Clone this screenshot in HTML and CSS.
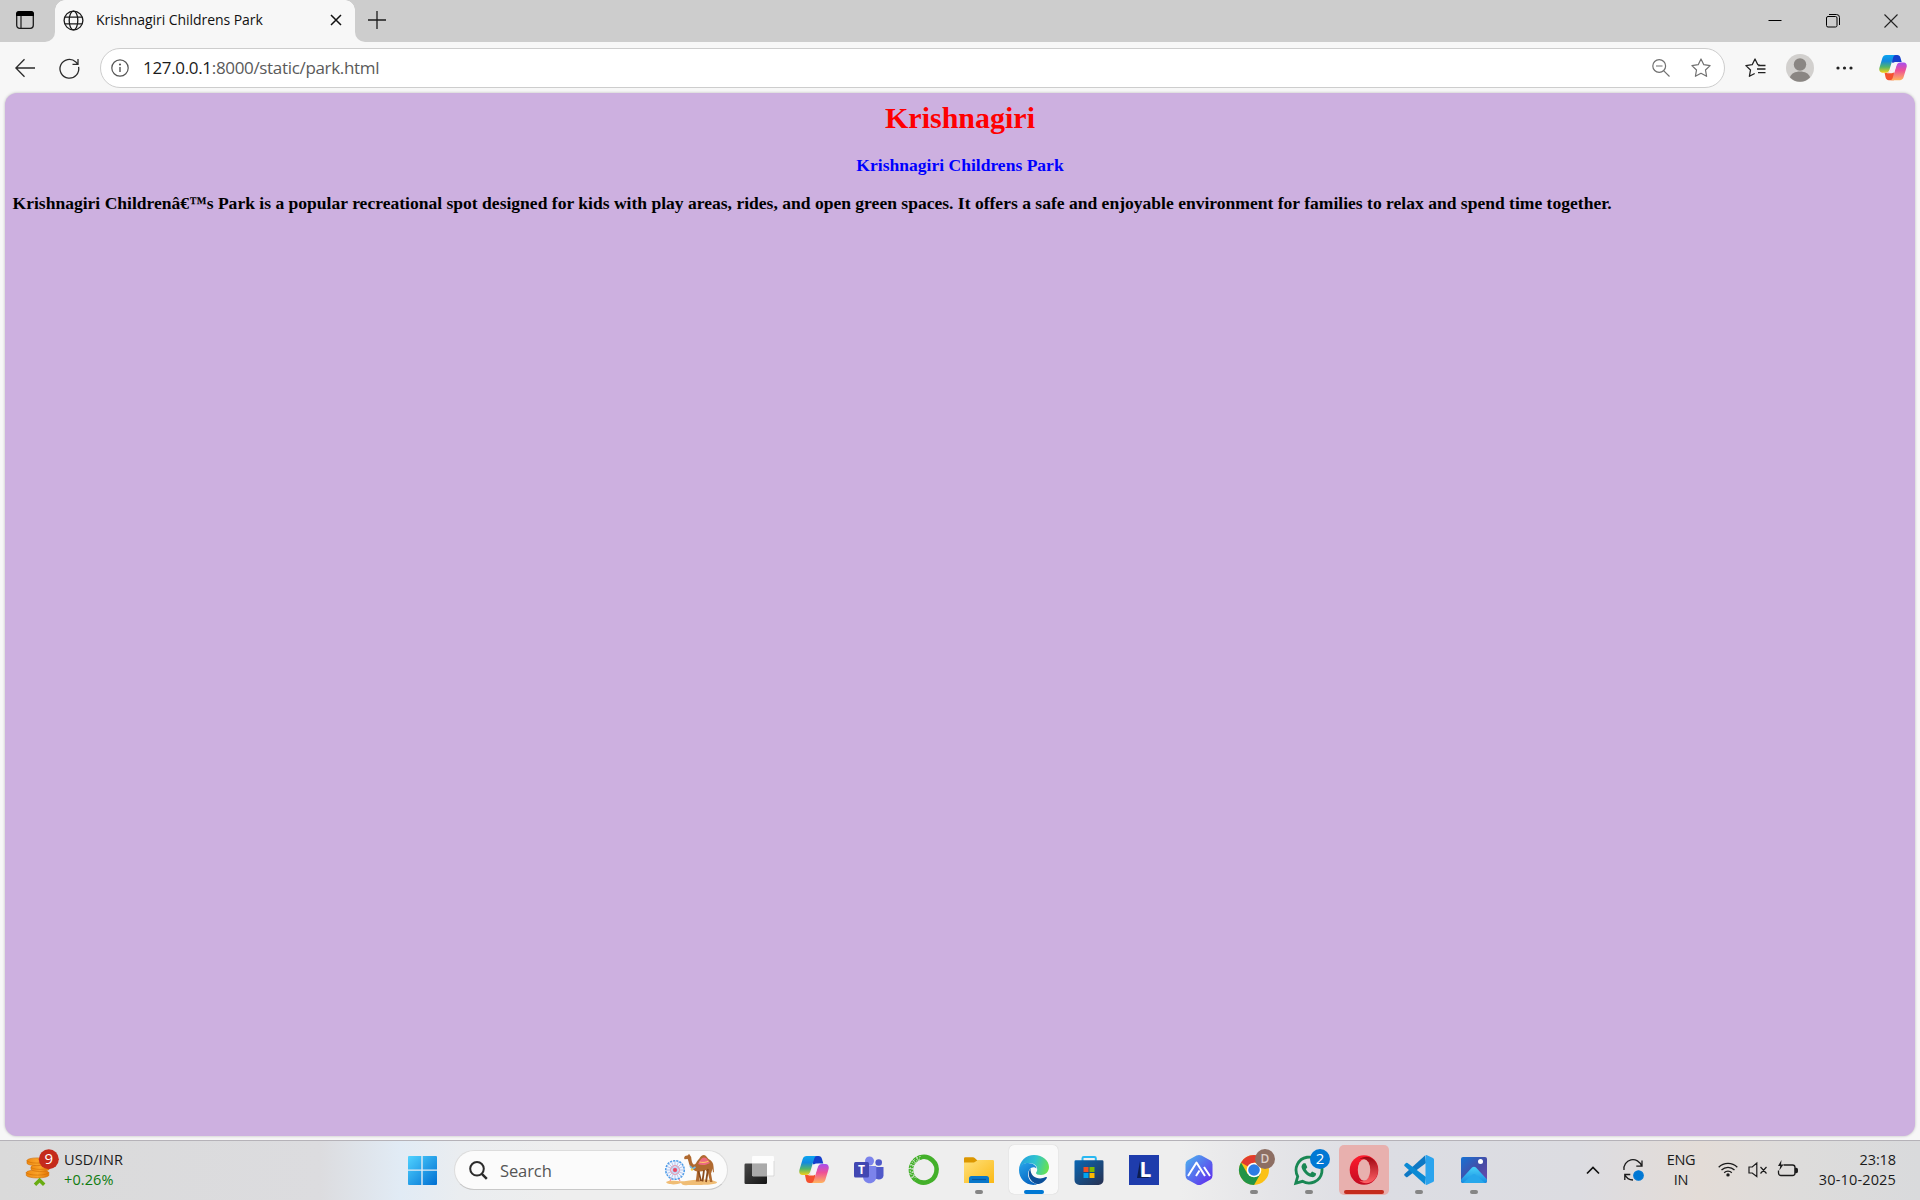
FILE: index.html
```html
<!DOCTYPE html>
<html lang="en">
<head>
<meta charset="utf-8">
<title>Krishnagiri Childrens Park</title>
<link rel="stylesheet" href="styles.css">
</head>
<body>
<svg class="defs" width="0" height="0">
  <defs>
    <linearGradient id="cpA" x1="0" y1="0" x2="0" y2="1"><stop offset="0" stop-color="#0ba5f0"/><stop offset=".35" stop-color="#1389e0"/><stop offset=".68" stop-color="#52b56a"/><stop offset="1" stop-color="#f5cf16"/></linearGradient>
    <linearGradient id="cpB" x1="0" y1="0" x2="0" y2="1"><stop offset="0" stop-color="#a64ef0"/><stop offset=".45" stop-color="#ee5097"/><stop offset="1" stop-color="#ffb45e"/></linearGradient>
    <symbol id="copilot" viewBox="0 0 30 30">
      <path d="M14 1h5.500c2 0 3 1 3.500 3l1.300 4.500H21c-1.500 0-2.500.8-3 2.500L14 9z" fill="#1640cc"/>
      <path d="M6 20h3.500c1.500 0 2.500-.8 3-2.500L16 20v8h-5.500c-2 0-3-1-3.500-3z" fill="#f4512e"/>
      <path d="M7.700 1H18c-1.600 0-2.300 1-2.900 3l-3.800 12.500c-.8 2.400-2 3.500-4.300 3.500H3.500C.8 20-.2 17.500.4 15L3.600 4.300C4.300 2 5.700 1 7.700 1z" fill="url(#cpA)"/>
      <path d="M22.300 28H12c1.600 0 2.300-1 2.900-3l3.800-12.500c.8-2.400 2-3.500 4.300-3.500h3.500c2.700 0 3.700 2.500 3.100 5l-3.200 10.700c-.7 2.300-2.100 3.300-4.100 3.300z" fill="url(#cpB)"/>
      <path d="M14 11.500c.6-2 1.500-3 3.500-3H22c-2 0-3 1.500-3.500 3.500l-1.800 6c-.6 2-1.600 2.500-3.200 2.500H8.500c2 0 3-1.200 3.600-3z" fill="#f6f3f6"/>
    </symbol>
    <linearGradient id="win" x1="0" y1="0" x2="1" y2="1"><stop offset="0" stop-color="#4fd2ff"/><stop offset="1" stop-color="#006fd2"/></linearGradient>
    <linearGradient id="dark" x1="0" y1="0" x2="1" y2="1"><stop offset="0" stop-color="#484848"/><stop offset="1" stop-color="#151515"/></linearGradient>
    <linearGradient id="fold" x1="0" y1="0" x2="1" y2="1"><stop offset="0" stop-color="#ffe07a"/><stop offset="1" stop-color="#fbb915"/></linearGradient>
    <linearGradient id="edgeTop" x1="0" y1=".4" x2="1" y2=".6"><stop offset="0" stop-color="#249fe0"/><stop offset=".5" stop-color="#2fc3cf"/><stop offset="1" stop-color="#6ae34c"/></linearGradient>
    <linearGradient id="edgeLow" x1="0" y1="0" x2=".5" y2="1"><stop offset="0" stop-color="#27a4ea"/><stop offset="1" stop-color="#0666c2"/></linearGradient>
    <linearGradient id="bag" x1="0" y1="0" x2="1" y2="1"><stop offset="0" stop-color="#0a67b4"/><stop offset="1" stop-color="#28304f"/></linearGradient>
    <linearGradient id="hex" x1="0" y1="0" x2="1" y2="1"><stop offset="0" stop-color="#4cb7ee"/><stop offset="1" stop-color="#6224ee"/></linearGradient>
    <linearGradient id="opera" x1="0" y1="0" x2="0" y2="1"><stop offset="0" stop-color="#ff1b2d"/><stop offset="1" stop-color="#c20b22"/></linearGradient>
    <linearGradient id="operaIn" x1="0" y1="0" x2="0" y2="1"><stop offset="0" stop-color="#9f0712"/><stop offset="1" stop-color="#ff6266"/></linearGradient>
    <linearGradient id="photo" x1="0" y1="0" x2="1" y2="1"><stop offset="0" stop-color="#1672d4"/><stop offset=".55" stop-color="#474ba5"/><stop offset="1" stop-color="#6e4bb0"/></linearGradient>
    <linearGradient id="hill" x1="0" y1="0" x2="0" y2="1"><stop offset="0" stop-color="#48d2fa"/><stop offset="1" stop-color="#168be0"/></linearGradient>
    <linearGradient id="coin" x1="0" y1="0" x2="1" y2="0"><stop offset="0" stop-color="#f08a10"/><stop offset=".5" stop-color="#f9a32a"/><stop offset="1" stop-color="#e57605"/></linearGradient>
  </defs>
</svg>

<header class="tabstrip">
  <div class="workspaces"><svg width="18" height="18" viewBox="0 0 18 18"><rect x=".7" y=".7" width="16.600" height="16.600" rx="3" fill="none" stroke="#1b1b1b" stroke-width="1.300"/><path d="M0 5V3a3 3 0 0 1 3-3h12a3 3 0 0 1 3 3v2z"/><path d="M5 5v12.500" stroke="#1b1b1b" stroke-width="1.200"/></svg></div>
  <div class="tab">
    <svg width="21" height="21" viewBox="0 0 21 21" fill="none" stroke="#1b1b1b" stroke-width="1.300"><circle cx="10.500" cy="10.500" r="9.400"/><ellipse cx="10.500" cy="10.500" rx="4.300" ry="9.400"/><path d="M2 7.200h17M2 13.800h17"/></svg>
    <span class="tab-title">Krishnagiri Childrens Park</span>
    <svg class="tab-close" width="12" height="12" viewBox="0 0 12 12" stroke="#111" stroke-width="1.500"><path d="M1 1l10 10M11 1L1 11"/></svg>
  </div>
  <svg class="newtab" width="18" height="18" viewBox="0 0 18 18" stroke="#1b1b1b" stroke-width="1.300"><path d="M9 0v18M0 9h18"/></svg>
  <div class="controls">
    <svg width="14" height="16" viewBox="0 0 14 16"><path d="M.5 7.500h13" stroke="#000"/></svg>
    <svg width="14" height="14" viewBox="0 0 14 14" fill="none" stroke="#000"><rect x=".5" y="2.500" width="10.500" height="10.500" rx="1.500"/><path d="M3 .5h7.500a3 3 0 0 1 3 3V11"/></svg>
    <svg width="14" height="14" viewBox="0 0 14 14" stroke="#222" stroke-width="1.100"><path d="M.5.5l13 13M13.500.5l-13 13"/></svg>
  </div>
</header>

<nav class="toolbar">
  <svg class="back" width="20" height="20" viewBox="0 0 20 20" fill="none" stroke="#2b2b2b" stroke-width="1.300"><path d="M20 10H1M9.500 1.200L.9 10l8.600 8.800"/></svg>
  <svg class="reload" width="21" height="21" viewBox="0 0 21 21" fill="none" stroke="#2b2b2b" stroke-width="1.300"><path d="M19.600 8.500A9.400 9.400 0 1 1 16.800 3.500l2 2.300M19 .5v5.500h-5.500" transform="translate(0 .4)"/></svg>
  <div class="address">
    <svg width="18" height="18" viewBox="0 0 18 18" fill="none" stroke="#555" stroke-width="1.200"><circle cx="9" cy="9" r="8.200"/><path d="M9 8v5" stroke-width="1.400"/><circle cx="9" cy="5.500" r=".5" fill="#555"/></svg>
    <span class="url"><b>127.0.0.1</b>:8000/static/park.html</span>
    <svg class="zoomout" width="18" height="18" viewBox="0 0 18 18" fill="none" stroke="#707070" stroke-width="1.200"><circle cx="7.200" cy="7" r="6.400"/><path d="M4 7h6.500M11.800 11.800l5.700 5.700"/></svg>
    <svg class="star" width="20" height="20" viewBox="0 0 20 20" fill="none" stroke="#707070" stroke-width="1.200" stroke-linejoin="round"><path d="M10 1l2.800 5.700 6.300.9-4.600 4.400 1.100 6.300L10 15.300l-5.600 3 1.100-6.300L.9 7.600l6.300-.9z"/></svg>
  </div>
  <svg class="favs" width="21" height="20" viewBox="0 0 21 20" fill="none" stroke="#222" stroke-width="1.300" stroke-linejoin="round"><path d="M14.500 6.900l-1.700-.2L10 1 7.200 6.700l-6.300.9L5.500 12l-1.100 6.300 5.300-2.800M13 7.500h7.500M12 11h8.500M13 14.600h7.500"/></svg>
  <svg class="profile" width="28" height="28" viewBox="0 0 28 28"><circle cx="14" cy="14" r="14" fill="#d2d0ce"/><circle cx="14" cy="10.500" r="6.200" fill="#8a8683"/><path d="M4 23.500c1.500-8 18.500-8 20 0A14 14 0 0 1 4 23.500z" fill="#8a8683"/></svg>
  <svg class="more" width="17" height="4" viewBox="0 0 17 4" fill="#222"><circle cx="2" cy="2" r="1.600"/><circle cx="8.500" cy="2" r="1.600"/><circle cx="15" cy="2" r="1.600"/></svg>
  <svg class="side-copilot" width="28" height="28"><use href="#copilot"/></svg>
</nav>

<main class="page">
  <h1>Krishnagiri</h1>
  <h3 class="place">Krishnagiri Childrens Park</h3>
  <h3 class="about">Krishnagiri Childrenâ€™s Park is a popular recreational spot designed for kids with play areas, rides, and open green spaces. It offers a safe and enjoyable environment for families to relax and spend time together.</h3>
</main>

<footer class="taskbar">
  <div class="widget">
    <svg width="34" height="38" viewBox="0 0 34 38">
      <g fill="url(#coin)" stroke="#cf6d05" stroke-width=".6"><path d="M.3 22.500v3c2 3.300 20.500 3.300 22.500 0v-3z"/><ellipse cx="11.500" cy="22.500" rx="11.200" ry="2.600"/><path d="M5 17v2.500c2 2.600 15 2.600 18 0V17z"/><ellipse cx="14" cy="17" rx="9" ry="2.400"/><path d="M1 10.500v3c2 2.800 18 2.800 20 0v-3z"/><ellipse cx="11" cy="10.500" rx="10" ry="2.600"/></g>
      <path d="M9 34.800l4.600-4.600 4.600 4.600" fill="none" stroke="#68ac12" stroke-width="3.400"/>
      <circle cx="22.800" cy="9.200" r="10" fill="#c42b1c"/><text x="22.800" y="14.300" class="badge-text">9</text>
    </svg>
    <div class="rates"><span>USD/INR</span><span class="up">+0.26%</span></div>
  </div>

  <div class="app start"><svg width="30" height="30" viewBox="0 0 30 30"><path d="M2 1h12.300v13.500H1V2a1 1 0 0 1 1-1zM15.700 1H29a1 1 0 0 1 1 1v12.500H15.700zM1 15.800h13.300V30H2a1 1 0 0 1-1-1zM15.700 15.800H30V29a1 1 0 0 1-1 1H15.700z" fill="url(#win)"/></svg></div>

  <div class="search">
    <svg width="19" height="19" viewBox="0 0 19 19" fill="none" stroke="#2b2b2b"><circle cx="8" cy="7.800" r="6.800" stroke-width="2"/><path d="M12.800 12.800l5 5" stroke-width="2.500"/></svg>
    <span>Search</span>
    <svg class="festival" width="53" height="32" viewBox="0 0 53 32">
      <path d="M1 28c4-3 13 0 20-1s22-3 31 1c1 3-17 3-25 3S18 32 16 29C12 31 2 31 1 28z" fill="#f0bd75"/>
      <path d="M10 17L5 27M10 17l5 10" stroke="#ff8c94" stroke-width="1.200"/>
      <circle cx="10" cy="16" r="9.300" fill="#eef5ff" stroke="#4a9be8" stroke-width="1.500" stroke-dasharray="2.200 1"/>
      <path d="M10 7v18M1 16h18M3.500 9.500l13 13M16.500 9.500l-13 13M6.500 8l7 16M13.500 8l-7 16M2 12.500l16 7M2 19.500l16-7" stroke="#93a5dc" stroke-width=".6"/><circle cx="10" cy="16" r="4.500" fill="none" stroke="#f08a9c" stroke-width=".8"/><circle cx="10" cy="16" r="2" fill="#ef4560"/>
      <path d="M19 4l1-2 3-.8L24-.2l1 1.400 1.200 1.800c.3 3 .8 7 2.800 7.500 2 .3 2.500-3.500 5-5.500 1.500-2.500 3-4 5-4s3 2.500 4.500 4c3 1.500 5 4 5 7.500l.5 6-1-.5-.6-3.500c-.4 2.500-1 4-1.400 5l1.500 8.500h-2.500l-2-9-2.500-3c-2 1-4 1.500-6 1.500L34 25l.8 2.500h-4l1.200-10c-4-1-7.500-4-8.500-10l-.8-2.500-3 .2z" fill="#b06a30"/>
      <path d="M39 16l-1.500 11.500M43 15l-2 13M33.500 17l2.500 10" stroke="#8a4a1c" stroke-width="1.800" fill="none"/>
      <path d="M33 10c1.500-2 3-6.500 6-6.500s4 3 6 5.500c-4 2.200-8 2.700-12 1z" fill="#ec6a82"/><path d="M34.500 8c3 .8 6 .5 9-.8" stroke="#ffd264" fill="none"/><path d="M25 12l2.500 3 3-2" stroke="#70bce5" stroke-width="1.600" fill="none"/><circle cx="27" cy="15.500" r="1.200" fill="#f9d247"/>
    </svg>
  </div>

  <div class="apps">
    <div class="app"><svg width="30" height="30" viewBox="0 0 30 30"><rect x=".5" y="8.500" width="22.500" height="20.500" rx="1.200" fill="url(#dark)"/><rect x="8" y="1" width="22" height="20.300" rx="1.200" fill="#fff" opacity=".85"/><path d="M8 8.500h15v12.800H9a1 1 0 0 1-1-1z" fill="#aaa"/><path d="M23 21h7V6" fill="none" stroke="#d2d2d2" stroke-width=".8"/></svg></div>
    <div class="app"><svg width="30" height="30"><use href="#copilot"/></svg></div>
    <div class="app"><svg width="30" height="30" viewBox="0 0 30 30"><circle cx="15.500" cy="6" r="4.500" fill="#7b83eb"/><circle cx="24.700" cy="7.500" r="3.300" fill="#5059c9"/><path d="M20 12h9.500v8.500c0 4.500-7 5-8.500 2z" fill="#5059c9"/><path d="M9 11h13.300v10.500c0 9-13.300 9-13.300 0z" fill="#7b83eb"/><rect y="7" width="15" height="15.500" rx="1.500" fill="#4147b2"/><text x="7.500" y="19" class="teams-text">T</text></svg></div>
    <div class="app"><svg width="30" height="30" viewBox="0 0 30 30" fill="none" stroke="#43b02a"><path d="M11 2.500A12.800 12.800 0 1 1 6.500 24.500" stroke-width="4.500"/><path d="M12 2.300A12.800 12.800 0 0 0 7 25" stroke-width="4.600" stroke-dasharray="3.600 .5"/><path d="M11.500 1.500A13.500 13.500 0 0 0 5 24M11 4A11.500 11.500 0 0 0 6.500 23" stroke="#eee" stroke-width=".9" stroke-dasharray="1.500 1.600"/></svg></div>
    <div class="app running"><svg width="30" height="30" viewBox="0 0 30 30"><path d="M0 8V3.500a1.300 1.300 0 0 1 1.300-1.300H9q1 0 1.700.7L14 6v3H0z" fill="#dc9700"/><path d="M0 7.500h10l4-2.500h14.700A1.300 1.300 0 0 1 30 6.300V28H0z" fill="url(#fold)"/><path d="M5 28v-4.500A2.500 2.500 0 0 1 7.500 21h15a2.500 2.500 0 0 1 2.500 2.500V28z" fill="#0877ca"/><path d="M8 24.500h14" stroke="#07559c" stroke-width="1.200"/></svg></div>
    <div class="app active"><svg width="30" height="30" viewBox="0 0 30 30"><path d="M0 14.500C.5 6 7 0 15 0c9 0 15 5.700 15 12 0 5-3.700 8-8 8-3.500 0-5-1-5-2 0-.7 1.200-1.400 1.200-3.600C18.200 10 14 8 9.500 8 5 8 1.500 10.500 0 14.500z" fill="url(#edgeTop)"/><path d="M0 15c0-4.500 4.500-7 9-7 5 0 8.500 3 8.500 5.500-1-1-2-1.300-3-1.300-3 0-5.500 3.500-5.500 7 0 5 4 9.500 9.500 9.500-1 .8-2.500 1.200-4 1.200C6 29.900 0 23 0 15z" fill="url(#edgeLow)"/><path d="M11.500 13.500c-4 5-1 13.500 6.500 15.500 4 .3 8-2.500 9.800-6 .4-.8-.3-1.300-1-.9C20 25.300 11 22.500 11.500 13.500z" fill="#0b4f99"/></svg></div>
    <div class="app"><svg width="30" height="30" viewBox="0 0 30 30"><path d="M8.500 6V3.200a1.300 1.300 0 0 1 1.300-1.300h10.700a1.300 1.300 0 0 1 1.300 1.300V6" fill="none" stroke="#28b8f2" stroke-width="2"/><path d="M.5 6.500a1.300 1.300 0 0 1 1.300-1.300h26.400a1.300 1.300 0 0 1 1.300 1.300V25a5 5 0 0 1-5 5h-19a5 5 0 0 1-5-5z" fill="url(#bag)"/><path d="M9.500 12h5v5h-5z" fill="#f25022"/><path d="M15.500 12h5v5h-5z" fill="#7fba00"/><path d="M9.500 18h5v5h-5z" fill="#00a4ef"/><path d="M15.500 18h5v5h-5z" fill="#ffb900"/></svg></div>
    <div class="app"><svg width="30" height="30" viewBox="0 0 30 30"><path d="M0 0h30v30H0z" fill="#1e3cac"/><path d="M11 6L8 23h11l3-2H12z" fill="#0d1d50"/><text x="16.500" y="22" class="letter">L</text></svg></div>
    <div class="app"><svg width="30" height="30" viewBox="0 0 30 30"><path d="M12.500.6q2.500-1.200 5 0l9 5q2 1.300 2 3.800v11.200q0 2.500-2 3.800l-9 5q-2.500 1.200-5 0l-9-5q-2-1.300-2-3.800V9.400q0-2.500 2-3.800z" fill="url(#hex)"/><path d="M4 21L12.500 7.500 21 21M12 21l3.500-5.500M20 12l6 9" fill="none" stroke="#fff" stroke-width="2" stroke-linejoin="round"/></svg></div>
    <div class="app running"><svg width="36" height="36" viewBox="0 -6 36 36" class="badged"><circle cx="15" cy="15" r="15" fill="#fbc116"/><path d="M15 15L2 7.500A15 15 0 0 1 28 7.500H15z" fill="#e33b2e"/><path d="M2 7.500A15 15 0 0 0 15 30l6.500-11.300L15 15l-6.500 3.700z" fill="#219447"/><circle cx="15" cy="15" r="7.300" fill="#fff"/><circle cx="15" cy="15" r="5.800" fill="#2c7be5"/><circle cx="26" cy="4" r="10" fill="#8d6e63"/><text x="26" y="8.400" class="badge-small">D</text></svg></div>
    <div class="app running"><svg width="36" height="36" viewBox="0 -6 36 36" class="badged"><path d="M1.800 28.200l1.900-6.800A13 13 0 1 1 8.500 26.300z" fill="none" stroke="#198754" stroke-width="2.800"/><path d="M9.500 8.200h2l1.800 4-1.500 2c1 2 2.500 3.300 4.500 4.200l1.800-1.800 4 1.900c0 3-2.500 4-4.500 3.600C12 21 8 15 7.500 12c0-1.500.8-3 2-3.800z" fill="#198754"/><circle cx="26" cy="4" r="10" fill="#0078d4"/><text x="26" y="9.300" class="badge-text">2</text></svg></div>
    <div class="app alert"><svg width="30" height="30" viewBox="0 0 30 30"><ellipse cx="15" cy="15" rx="14.300" ry="14.800" fill="url(#opera)"/><path d="M10 4.500C17-1.500 29 3 29 15S17 31.500 10 25.500c6 3 11-3 11-10.500S16 1.500 10 4.500z" fill="url(#operaIn)"/><ellipse cx="15" cy="15" rx="6.200" ry="10.800" fill="#e8b0ae"/></svg></div>
    <div class="app running"><svg width="30" height="30" viewBox="0 0 30 30"><path d="M22 8L3.500 22q-.8.600-1.500 0l-1.500-1.400q-.7-.8 0-1.500L21 .5z" fill="#0e78c4"/><path d="M22 22L3.500 8Q2.700 7.400 2 8L.5 9.400q-.7.800 0 1.500L21 29.500z" fill="#0b8ad4"/><path d="M21.500.3Q22.500-.2 23 .2l6 2.800q1 .5 1 1.500v21q0 1-1 1.500l-6 2.800q-.8.300-1.500-.3z" fill="#2ba4ee"/></svg></div>
    <div class="app running"><svg width="30" height="30" viewBox="0 0 30 30"><rect x="2" y="2" width="26" height="26" rx="2" fill="url(#photo)"/><path d="M2 24.500L13 12.500q2-1.700 4 0l11 12V26a2 2 0 0 1-2 2H4a2 2 0 0 1-2-2z" fill="url(#hill)"/><path d="M4 28l9.500-8.500q1.500-1.200 3 0L26 28z" fill="#27a7eb"/><circle cx="21.500" cy="6.500" r="2.500" fill="#fff"/></svg></div>
  </div>

  <div class="tray">
    <svg class="chevron" width="14" height="9" viewBox="0 0 14 9" fill="none" stroke="#111" stroke-width="1.700"><path d="M1 7.500l6-6 6 6"/></svg>
    <svg class="sync" width="22" height="22" viewBox="0 0 22 22" fill="none" stroke="#1b1b1b" stroke-width="1.300"><path d="M1 11a9 9 0 0 1 17.500-4M19 1.500v5.700h-5.700M1.800 21v-5.500h5.500M1.800 15.500A9 9 0 0 0 10 21"/><circle cx="15.500" cy="16.500" r="4.700" fill="#0078d4" stroke="#0078d4"/></svg>
    <div class="lang"><span>ENG</span><span>IN</span></div>
    <svg class="wifi" width="20" height="16" viewBox="0 0 20 16" fill="none" stroke="#1b1b1b" stroke-width="1.300"><path d="M.7 5.200a13.200 13.200 0 0 1 18.600 0M3.500 8a9.200 9.200 0 0 1 13 0M6.200 10.700a5.400 5.400 0 0 1 7.600 0"/><circle cx="10" cy="12.900" r="1.700" fill="#1b1b1b" stroke="none"/></svg>
    <svg class="mute" width="20" height="16" viewBox="0 0 20 16" fill="none" stroke="#1b1b1b" stroke-width="1.200"><path d="M1 5h3.200L8.800 1v13.500L4.200 11H1zM12.500 5l6 6.500M18.500 5l-6 6.500"/></svg>
    <svg class="battery" width="21" height="18" viewBox="0 0 21 18" fill="none" stroke="#1b1b1b" stroke-width="1.300"><path d="M6.500 4h9A2.500 2.500 0 0 1 18 6.500V12a2.500 2.500 0 0 1-2.500 2.500H4A2.500 2.500 0 0 1 1.500 12V9.500"/><path d="M18.300 7.500v4h1q1 0 1-1v-2q0-1-1-1z" fill="#1b1b1b"/><path d="M4.500-1L1 5h2.300l-1 4.500L6.500 3.500H4z" fill="#1b1b1b" stroke="none"/></svg>
    <div class="clock"><span class="time">23:18</span><span class="date">30-10-2025</span></div>
  </div>
</footer>
</body>
</html>
```
FILE: styles.css
```css
* { box-sizing: border-box; }
body {
  margin: 0;
  width: 1920px;
  height: 1200px;
  overflow: hidden;
  display: flex;
  flex-direction: column;
  background: #f7f7f7;
  font-family: "Open Sans", "Noto Sans", sans-serif;
  color: #1b1b1b;
}
svg { display: block; flex: none; overflow: visible; }
span { white-space: nowrap; }
.defs { position: absolute; }

/* tab strip */
.tabstrip { display: flex; height: 43px; flex: none; background: #f7f7f7; }
.workspaces { width: 55px; height: 42px; padding: 11px 0 0 16px; background: #cdcdcd; border-radius: 0 0 10px 0; }
.tab { width: 300px; height: 43px; padding: 0 13px 3px 8px; display: flex; align-items: center; background: #f7f7f7; position: relative; }
.tab::before, .tab::after { content: ""; position: absolute; top: 0; width: 10px; height: 10px; }
.tab::before { left: 0; background: radial-gradient(circle at 100% 100%, transparent 9.500px, #cdcdcd 10px); }
.tab::after { right: 0; background: radial-gradient(circle at 0 100%, transparent 9.500px, #cdcdcd 10px); }
.tab-title { margin: 0 0 2px 12px; font-size: 14px; letter-spacing: -0.06px; color: #111; }
.tab-close { margin-left: auto; }
.tabstrip > .newtab { width: 45px; height: 42px; padding: 11px 14px 13px 13px; background: #cdcdcd; border-radius: 0 0 0 10px; }
.controls { flex: 1; height: 42px; display: flex; justify-content: flex-end; align-items: center; gap: 44px; padding-right: 22px; background: #cdcdcd; }

/* toolbar */
.toolbar { display: flex; align-items: center; height: 50px; flex: none; padding: 0 13px 0 15px; }
.reload { margin-left: 24px; }
.address { width: 1625px; height: 40px; margin-left: 20px; padding: 0 13px 0 10px; display: flex; align-items: center; border: 1px solid #cdcdcd; border-radius: 20px; background: #fff; }
.url { margin: 0 0 2px 14px; font-size: 17px; letter-spacing: -0.33px; color: #5a5a5a; }
.url b { font-weight: 400; color: #1b1b1b; }
.zoomout { margin-left: auto; }
.star { margin-left: 21px; }
.favs { margin-left: 20px; }
.profile { margin-left: 20px; }
.more { margin-left: 22px; }
.side-copilot { margin-left: auto; }

/* page content */
.page {
  height: 1043px;
  flex: none;
  margin: 0 5px;
  padding: 7px 7.500px;
  border-radius: 12px;
  background: #cdb0e0;
  box-shadow: 0 0 3px rgba(0, 0, 0, .25);
  font-family: "Liberation Serif", serif;
  font-weight: 700;
}
.page h1, .page h3 { margin: 0; }
.page h1 { font-size: 30px; line-height: 36px; color: #f00; text-align: center; }
.page h3 { font-size: 17.563px; line-height: 20px; }
.page .place { margin-top: 19px; color: #00f; text-align: center; }
.page .about { margin-top: 18px; color: #000; white-space: nowrap; }

/* taskbar */
.taskbar {
  display: flex;
  align-items: center;
  height: 60px;
  flex: none;
  margin-top: 4px;
  position: relative;
  background: linear-gradient(90deg, #dadada 0, #dcdcdf 320px, #e1ebf5 400px, #eaedf0 460px, #eee 560px, #eee 1180px, #e5e5e8 1270px, #dcdde3 1380px, #dcdce1 1580px, #e3dcd7 1700px, #dddcdb 1800px, #d9dadc 1920px);
}
.taskbar::before { content: ""; position: absolute; left: 0; right: 0; top: 0; height: 1px; background: #b5b2b8; }
.widget { display: flex; width: 394px; padding-left: 26px; }
.rates { display: flex; flex-direction: column; margin-left: 4px; font-size: 14.500px; line-height: 20px; letter-spacing: 0.1px; }
.up { color: #107c10; }
.app { position: relative; width: 55px; height: 60px; display: flex; align-items: center; justify-content: center; }
.search { width: 274px; height: 40px; margin-left: 5px; margin-right: 3px; padding: 0 9px 0 14px; display: flex; align-items: center; border: 1px solid #dcdcdc; border-bottom-color: #c8c8c8; border-radius: 20px; background: #fbfbfb; }
.search span { margin-left: 12px; font-size: 16.500px; color: #555; letter-spacing: -0.1px; }
.festival { margin-left: auto; }
.apps { display: flex; }
.badged { margin: -6px 0 0 6px; }
.running::after, .active::after, .alert::after { content: ""; position: absolute; bottom: 6px; left: 23.500px; width: 8px; height: 4px; border-radius: 2px; background: #858585; }
.active::before, .alert::before { content: ""; position: absolute; left: 3px; top: 5px; width: 49px; height: 49px; border-radius: 5px; background: #f9f9f9; box-shadow: 0 0 1px #bbb; }
.alert::before { background: #e8b0ae; box-shadow: none; left: 2.500px; width: 50px; height: 50px; }
.active svg, .alert svg { position: relative; }
.active::after { left: 17.500px; width: 20px; background: #0078d4; }
.alert::after { left: 7.500px; width: 40px; background: #c42b1c; }
.badge-text { font: 15px "Open Sans", sans-serif; fill: #fff; text-anchor: middle; }
.badge-small { font: 600 12px "Open Sans", sans-serif; fill: #ddd0cb; text-anchor: middle; }
.teams-text { font: 700 12px "Open Sans", sans-serif; fill: #fff; text-anchor: middle; }
.letter { font: 700 21px "Open Sans", sans-serif; fill: #fff; text-anchor: middle; }
.tray { flex: 1; display: flex; align-items: center; padding-right: 24px; font-size: 14.500px; line-height: 20px; letter-spacing: -0.3px; }
.chevron { margin-left: 85px; }
.sync { margin-left: 23px; }
.lang { display: flex; flex-direction: column; align-items: center; width: 30px; margin-left: 21px; }
.wifi { margin-left: 22px; }
.mute { margin-left: 10px; }
.battery { margin-left: 9px; }
.clock { margin-left: auto; display: flex; flex-direction: column; align-items: flex-end; letter-spacing: 0.15px; }
.time { letter-spacing: -0.1px; }
```
